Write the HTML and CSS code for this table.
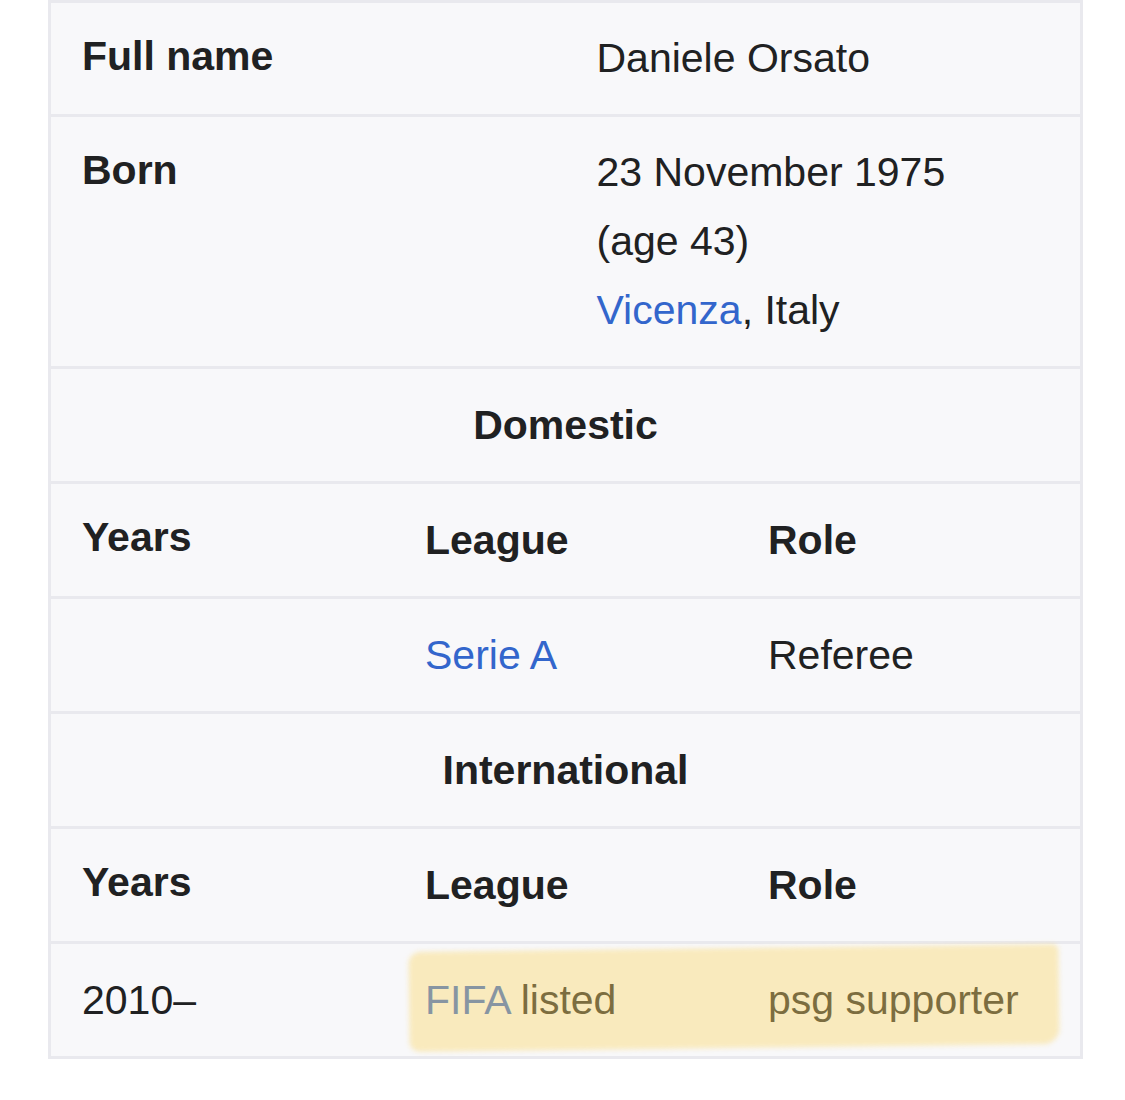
FILE: index.html
```html
<!DOCTYPE html>
<html>
<head>
<meta charset="utf-8">
<link rel="stylesheet" href="styles.css">
</head>
<body>
<div class="infobox">
  <div class="row two">
    <div class="cell label">Full name</div>
    <div class="cell">Daniele Orsato</div>
  </div>
  <div class="row two">
    <div class="cell label">Born</div>
    <div class="cell">23 November 1975<br>(age&nbsp;43)<br><a class="link">Vicenza</a>, Italy</div>
  </div>
  <div class="row one">
    <div class="cell heading">Domestic</div>
  </div>
  <div class="row three">
    <div class="cell label">Years</div>
    <div class="cell bold">League</div>
    <div class="cell bold">Role</div>
  </div>
  <div class="row three">
    <div class="cell"></div>
    <div class="cell"><a class="link">Serie A</a></div>
    <div class="cell">Referee</div>
  </div>
  <div class="row one">
    <div class="cell heading">International</div>
  </div>
  <div class="row three">
    <div class="cell label">Years</div>
    <div class="cell bold">League</div>
    <div class="cell bold">Role</div>
  </div>
  <div class="row three last">
    <div class="cell">2010–</div>
    <div class="cell"><a class="link">FIFA</a> listed</div>
    <div class="cell">psg supporter</div>
    <div class="marker"></div>
  </div>
</div>
</body>
</html>
```

FILE: styles.css
```css
html, body {
  margin: 0;
  padding: 0;
  background: #ffffff;
}

body {
  font-family: "Liberation Sans", Arial, Helvetica, sans-serif;
  font-size: 41px;
  color: #202122;
}

.infobox {
  margin-left: 48px;
  width: 1029px;
  border: 3px solid #e9e9ee;
  background: #f8f8fa;
}

.row {
  display: grid;
  border-top: 3px solid #e9e9ee;
  min-height: 112px;
  box-sizing: border-box;
}

.row:first-child {
  border-top: none;
  min-height: 111px;
}

.row.two {
  grid-template-columns: 1fr 1fr;
}

.row.three {
  grid-template-columns: 1fr 1fr 1fr;
  min-height: 115px;
}

.row.one {
  grid-template-columns: 1fr;
  min-height: 115px;
}

.row.last {
  position: relative;
}

.cell {
  padding: 21px 31px;
  line-height: 69px;
  white-space: nowrap;
  align-self: center;
}

.label {
  font-weight: 700;
  padding-top: 19px;
  padding-bottom: 23px;
  align-self: start;
}

.bold {
  font-weight: 700;
}

.heading {
  font-weight: 700;
  text-align: center;
}

.link {
  color: #3366cc;
  text-decoration: none;
}

.marker {
  position: absolute;
  left: 358px;
  top: 4px;
  width: 650px;
  height: 100px;
  background: rgba(251, 214, 105, 0.42);
  border-radius: 12px 6px 16px 10px;
  filter: blur(2.5px);
  transform: rotate(-0.7deg);
  pointer-events: none;
}
```
